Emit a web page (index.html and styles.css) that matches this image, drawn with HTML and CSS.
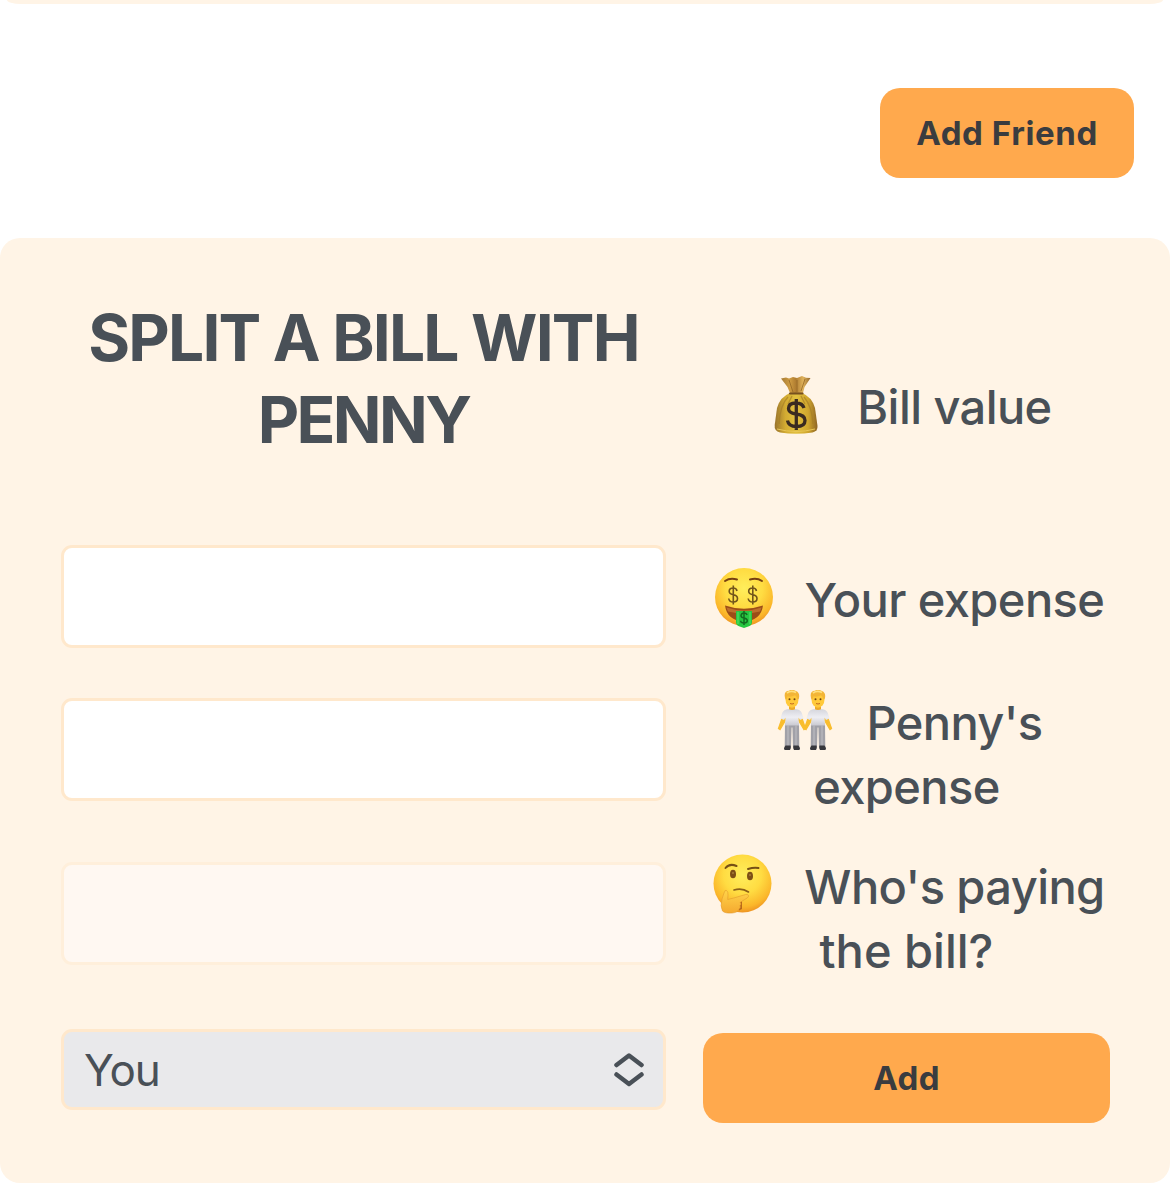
FILE: index.html
```html
<!DOCTYPE html>
<html lang="en">
<head>
<meta charset="utf-8">
<title>Split a bill</title>
<link rel="stylesheet" href="styles.css">
</head>
<body>
<svg class="defs" width="0" height="0" aria-hidden="true">
  <defs>
    <radialGradient id="face" cx=".5" cy=".35" r=".65"><stop offset="0" stop-color="#ffee5c"/><stop offset=".5" stop-color="#ffdc42"/><stop offset=".85" stop-color="#fbb62a"/><stop offset="1" stop-color="#ee9423"/></radialGradient>
    <linearGradient id="sack" x1="0" x2="1"><stop offset="0" stop-color="#99732b"/><stop offset=".25" stop-color="#d3ab32"/><stop offset=".5" stop-color="#e2c03f"/><stop offset=".78" stop-color="#d0a62e"/><stop offset="1" stop-color="#8e6526"/></linearGradient>
    <linearGradient id="neck" x1="0" x2="1"><stop offset="0" stop-color="#a67b35"/><stop offset=".3" stop-color="#cf9c42"/><stop offset=".5" stop-color="#b07d31"/><stop offset=".75" stop-color="#dfb25c"/><stop offset="1" stop-color="#94682c"/></linearGradient>
    <linearGradient id="shirt" x1="0" x2="0" y1="0" y2="1"><stop offset="0" stop-color="#d4d5dc"/><stop offset=".5" stop-color="#eeeef3"/><stop offset="1" stop-color="#c9c9d0"/></linearGradient>
    <linearGradient id="hand" x1="0" x2="0" y1="0" y2="1"><stop offset="0" stop-color="#ffd44a"/><stop offset="1" stop-color="#f5a930"/></linearGradient>
    <g id="person">
      <path d="M8 22Q6 24 5 29L1.500 39l1.500 1 6-10M22 22q2 2 3 7l3.500 10-1.500 1-6-10" fill="#f9bd2e" stroke="#f9bd2e" stroke-width="1.300"/>
      <path d="M12 15h6v7h-6z" fill="#edaa28"/>
      <path d="M8 34h14l.3 24h-6.300L15.400 38h-.8L14 58H7.700z" fill="#a1a1a8"/>
      <path d="M11 36v21M19 36v21" stroke="#b5b5bb" stroke-width="1.500"/>
      <path d="M11.500 19.500q3.500 2 7 0 5 .5 6.300 4L26.500 29l-3.500 1.500-1.500-2.500.5 8H8l.5-8L7 30.500 3.500 29l1.700-5.500q1.300-3.500 6.300-4z" fill="url(#shirt)"/>
      <ellipse cx="15" cy="10" rx="6.500" ry="8.300" fill="#ffc93a"/>
      <path d="M8.300 9.500Q6 1.500 12 1.200q3-2 7 .3 4.500 2 2.700 8l-1.200.3q-.8-3-2.500-4-4 2-7.500 1L9.500 10z" fill="#f3b536"/>
      <path d="M10 3.500q4-3 9-.5" fill="none" stroke="#ffe07d" stroke-width="1.800"/>
      <circle cx="12.500" cy="9.800" r="1" fill="#704510"/><circle cx="17.500" cy="9.800" r="1" fill="#704510"/>
      <path d="M13 14q2 1 4 0" stroke="#c36a20" fill="none"/>
      <path d="M8.500 56h5q1 4-1.500 5H8.500q-3-1.500 0-5zM16.500 56h5q3 3.500 0 5H18q-2.500-1-1.500-5z" fill="#37373c"/>
    </g>
  </defs>
</svg>

<div class="list-end"></div>
<div class="toolbar"><button class="button button-friend" type="button">Add Friend</button></div>

<form class="split">
  <h2 class="title"><span class="title-top">Split a bill with</span><br><span class="title-name">Penny</span></h2>
  <label class="label">
    <span class="line">
      <svg class="emoji" viewBox="0 0 60 60">
        <path d="M15 3.500l5-1 3 1 4-1.500 4 1 5-2 4 1.700 4.500.3-6 9-1.500 6H24l-2.500-6z" fill="url(#neck)"/>
        <path d="M23 5l4 12M31 5v12M39 4l-4 12" stroke="#8d6021" stroke-width="1" fill="none" opacity=".7"/>
        <path d="M24 18h12q10 4 13 15l2.500 18q.5 5-5 6.500Q30 60 14 57.500 8 56 8.700 50L11 33Q14 22 24 18z" fill="url(#sack)"/>
        <path d="M22 22q-8 8-9 27M38 22q8 9 9 27M26 21l-4 8M35 21l4 8" stroke="#a57c27" stroke-width="1.300" fill="none" opacity=".65"/>
        <path d="M11 54q19 5 38 0" stroke="#e8c657" stroke-width="1" fill="none"/>
        <path d="M24 18.500h12.500" stroke="#77501e" stroke-width="2.200" stroke-linecap="round"/>
        <path d="M38 33q-1.500-5-8-5-7.500 0-7.500 5.500 0 4.500 7.500 5.500 9 1 9 6.500 0 6-8.500 6-8 0-9-6M30.300 24v31" stroke="#3a2a20" stroke-width="3.300" fill="none"/>
      </svg>
      <span class="text-bill">Bill value</span>
    </span>
  </label>

  <input class="field" type="text" aria-label="Bill value">
  <label class="label label-single">
    <span class="line">
      <svg class="emoji" viewBox="0 0 60 60">
        <circle cx="30" cy="29" r="29" fill="url(#face)"/>
        <path d="M11 13q5-3.500 12-1.500M36 11.500q7-2 12 1.500" stroke="#774011" stroke-width="2" fill="none" stroke-linecap="round"/>
        <path d="M11 37.500q19 6.500 38 0-2 15-19 16Q13 52.500 11 37.500z" fill="#9c4d18"/>
        <path d="M12.500 39.500q17.500 6 35 0l-1.500 4q-16 4-32 0z" fill="#bd6f2c"/>
        <path d="M22 43h16v11q0 3-3 4.200l-5 1.800-5-1.800q-3-1.200-3-4.200z" fill="#27c741"/>
        <path d="M24 44v12M36 44v12" stroke="#57e56a" stroke-width="1"/>
        <g fill="none" stroke="#72551b" stroke-width="1.600"><path id="dollar" d="M23 23q-.5-3-3.800-3-4 0-4 3.300 0 2.700 4 3.400 4.300.6 4.300 3.800 0 3.500-4.300 3.500-4 0-4.500-3.500M19.300 17.500v19"/><use href="#dollar" x="19.500"/></g>
        <path d="M33 47q-.5-2-3-2t-3 2.400q0 2 3 2.600 3.300.5 3.300 2.700T30 55t-3.300-2.300M30 43v14" fill="none" stroke="#126b20" stroke-width="1.500"/>
      </svg>
      <span class="text-your">Your expense</span>
    </span>
  </label>

  <input class="field" type="text" aria-label="Your expense">
  <label class="label">
    <span class="line">
      <svg class="emoji" viewBox="0 0 60 60"><use href="#person" x="2" y="-.5"/><use href="#person" x="28" y="-.5"/></svg>
      <span class="text-penny">Penny's</span>
    </span>
    <span class="line text-expense">expense</span>
  </label>

  <input class="field" type="text" disabled aria-label="Penny's expense">
  <label class="label">
    <span class="line">
      <svg class="emoji" viewBox="0 0 60 60">
        <circle cx="29.500" cy="29.500" r="29" fill="url(#face)"/>
        <path d="M12.500 14q4-5 11-2M35 15q6-2 10.500-1" stroke="#775015" stroke-width="2" fill="none" stroke-linecap="round"/>
        <ellipse cx="20" cy="20" rx="3" ry="4.300" fill="#7d4f16"/><ellipse cx="37" cy="22" rx="3" ry="4.300" fill="#7d4f16"/>
        <circle cx="20" cy="19" r="1" fill="#a77d38"/><circle cx="37" cy="21" r="1" fill="#a77d38"/>
        <path d="M21 36q8-2.500 14.500 2" stroke="#8b6018" stroke-width="1.600" fill="none" stroke-linecap="round"/>
        <path d="M26 48v8.500l3-1.500v-8z" fill="#b9691a"/>
        <path d="M9.500 57q-2.500-5-.5-12l2-6q.8-3.500 2.500-2.500 1.800 1 1.500 4.500l-.3 4.500 6-1.500 12-3.500q2.800-.5 3 1.500-.5 2-4 3.500L27 48.500q2 1.500 0 3 1 2-1 3.500-1 3.500-7 4-7 .5-9.500-2z" fill="url(#hand)" stroke="#e39a2b" stroke-width=".6"/>
      </svg>
      <span class="text-who">Who's paying</span>
    </span>
    <span class="line text-the">the bill?</span>
  </label>

  <div class="select" role="combobox" aria-label="Who's paying the bill?">
    <span class="select-value">You</span>
    <svg class="chevrons" viewBox="0 0 30 34"><path d="M2.500 12L15 2.500 27.500 12M2.500 21.500L15 31l12.500-9.500"/></svg>
  </div>
  <button class="button button-add" type="button">Add</button>
</form>
</body>
</html>
```
FILE: styles.css
```css
* {
  box-sizing: border-box;
}

body {
  margin: 0;
  background: #fff;
  color: #495057;
  font-family: Inter, "Liberation Sans", sans-serif;
}

.defs {
  display: block;
}

.list-end {
  height: 4px;
  margin: 0 7px;
  background: #fff4e6;
  border-radius: 0 0 14px 14px / 0 0 4px 4px;
}

.toolbar {
  display: flex;
  justify-content: flex-end;
  height: 234px;
  padding: 84px 36px 0 0;
}

.button {
  height: 90px;
  padding: 0;
  border: 0;
  border-radius: 20px;
  background: #ffa94d;
  color: #3a3c3f;
  font: 700 33px/91px Inter, "Liberation Sans", sans-serif;
  text-align: center;
}

.button-friend {
  width: 254px;
  letter-spacing: 0.6px;
}

.button-add {
  align-self: start;
  width: 407px;
  margin-top: 24px;
  letter-spacing: 0.4px;
}

.split {
  display: grid;
  grid-template-columns: 605px 407px;
  grid-template-rows: 214px 115px 137px 137px 112px;
  gap: 27px 37px;
  align-items: center;
  height: 945px;
  padding: 60px 60px 0 61px;
  border-radius: 20px;
  background: #fff4e6;
}

.title {
  align-self: start;
  margin: -1px 0 0;
  font-size: 64px;
  font-weight: 700;
  line-height: 82px;
  text-align: center;
  text-transform: uppercase;
  white-space: nowrap;
}

.title-top {
  letter-spacing: -1.8px;
}

.title-name {
  letter-spacing: -2.6px;
}

.label {
  display: flex;
  flex-direction: column;
  align-items: center;
  padding-top: 10px;
  font-size: 47px;
  font-weight: 500;
  letter-spacing: -0.57px;
  line-height: 64px;
  white-space: nowrap;
}

.split > .label:first-of-type {
  padding-top: 4px;
}

.label-single {
  padding-top: 7px;
}

.line {
  display: flex;
  align-items: center;
  height: 64px;
}

.text-the {
  letter-spacing: 0;
}

.emoji {
  flex: none;
  width: 60px;
  height: 60px;
  margin: 0 31px 5px 5px;
}

.field {
  width: 100%;
  height: 103px;
  padding: 0 24px;
  border: 3px solid #ffe8cc;
  border-radius: 11px;
  background: #fff;
  color: #495057;
  font: 400 44px Inter, "Liberation Sans", sans-serif;
}

.field:disabled {
  border-color: #ffefdb;
  background: #fff8f2;
}

.select {
  display: flex;
  align-self: start;
  align-items: center;
  justify-content: space-between;
  height: 81px;
  margin-top: 20px;
  padding: 0 19px 0 20px;
  border: 3px solid #ffe8cc;
  border-radius: 11px;
  background: #e9e9eb;
  font-size: 44px;
  letter-spacing: -1px;
}

.chevrons {
  width: 30px;
  height: 34px;
  fill: none;
  stroke: #495057;
  stroke-width: 4.5;
  stroke-linecap: round;
  stroke-linejoin: round;
}
```
